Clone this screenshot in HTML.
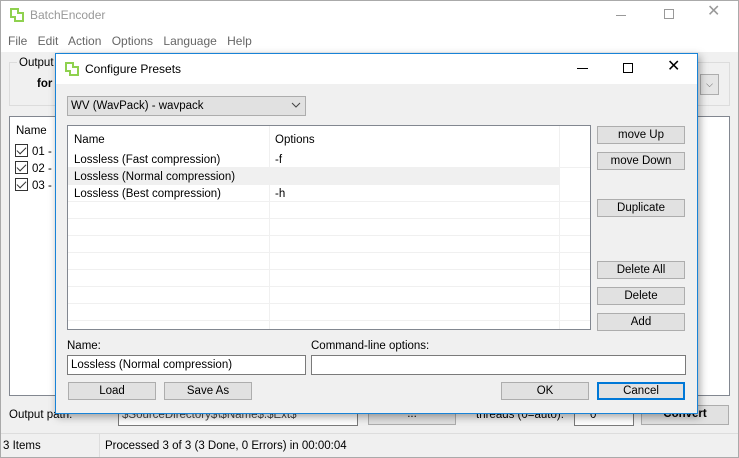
<!DOCTYPE html><html><head><style>
*{box-sizing:border-box;margin:0;padding:0}
body{width:739px;height:458px;position:relative;overflow:hidden;background:#f0f0f0;font-family:"Liberation Sans",sans-serif;font-size:11.5px;line-height:16px;color:#000}
.a{position:absolute}
.btn{position:absolute;background:#e1e1e1;border:1px solid #adadad;text-align:center;line-height:16px;font-size:11.5px}
.row{position:absolute;left:0;right:0;height:17px;border-bottom:1px solid #f0f0f0}
.cb{display:inline-block;width:13px;height:13px;border:1px solid #333;vertical-align:-2px;margin-right:4px;position:relative}
.cb:after{content:"";position:absolute;left:3px;top:0px;width:4px;height:8px;border:solid #333;border-width:0 1px 1px 0;transform:rotate(45deg)}
</style></head><body>
<div class="a" style="left:0;top:0;width:739px;height:458px;border:1px solid #aaa"></div>
<div class="a" style="left:1px;top:1px;width:737px;height:51px;background:#fff"></div>
<svg class="a" style="left:10px;top:8px" width="14" height="14"><path d="M1 1h7v4h5v8H5V9H1z" fill="none" stroke="#8fd14f" stroke-width="2"/></svg>
<div class="a" style="left:30px;top:7px;color:#999;font-size:12px">BatchEncoder</div>
<div class="a" style="left:616px;top:15px;width:10px;height:1px;background:#999"></div>
<div class="a" style="left:664px;top:9px;width:10px;height:10px;border:1px solid #999"></div>
<div class="a" style="left:707px;top:3px;color:#999;font-size:16px;line-height:18px">✕</div>
<div class="a" style="left:8px;top:33px;color:#666;font-size:12px;word-spacing:7px">File Edit Action Options Language Help</div>
<div class="a" style="left:9px;top:62px;width:721px;height:44px;border:1px solid #dcdcdc"></div>
<div class="a" style="left:17px;top:55px;background:#f0f0f0;padding:0 2px">Output</div>
<div class="a" style="left:37px;top:76px;font-weight:bold">for</div>
<div class="a" style="left:700px;top:74px;width:19px;height:21px;border:1px solid #adadad;background:#e5e5e5;font-size:9px;text-align:center;line-height:19px;color:#555">⌵</div>
<div class="a" style="left:9px;top:116px;width:721px;height:280px;background:#fff;border:1px solid #828790"></div>
<div class="a" style="left:16px;top:123px">Name</div>
<div class="a" style="left:15px;top:144px;line-height:17px"><span class="cb"></span>01 -<br><span class="cb"></span>02 -<br><span class="cb"></span>03 -</div>
<div class="a" style="left:9px;top:407px">Output path:</div>
<div class="a" style="left:118px;top:405px;width:240px;height:21px;background:#fff;border:1px solid #7a7a7a;padding:1px 3px;color:#444">$SourceDirectory$\$Name$.$Ext$</div>
<div class="btn" style="left:368px;top:405px;width:88px;height:20px">...</div>
<div class="a" style="left:476px;top:407px">threads (0=auto):</div>
<div class="a" style="left:574px;top:405px;width:60px;height:21px;background:#fff;border:1px solid #7a7a7a;padding:1px 15px">0</div>
<div class="btn" style="left:641px;top:405px;width:88px;height:20px;font-weight:bold">Convert</div>
<div class="a" style="left:1px;top:433px;width:737px;height:1px;background:#ddd"></div>
<div class="a" style="left:99px;top:434px;width:1px;height:23px;background:#ddd"></div>
<div class="a" style="left:3px;top:438px">3 Items</div>
<div class="a" style="left:105px;top:438px">Processed 3 of 3 (3 Done, 0 Errors) in 00:00:04</div>
<div class="a" style="left:55px;top:53px;width:643px;height:361px;background:#f0f0f0;border:1px solid #1883d7;box-shadow:2px 3px 8px rgba(0,0,0,.35)"></div>
<div class="a" style="left:56px;top:54px;width:641px;height:30px;background:#fff"></div>
<svg class="a" style="left:65px;top:62px" width="14" height="14"><path d="M1 1h7v4h5v8H5V9H1z" fill="none" stroke="#8fd14f" stroke-width="2"/></svg>
<div class="a" style="left:85px;top:61px;font-size:12px">Configure Presets</div>
<div class="a" style="left:577px;top:68px;width:11px;height:1px;background:#000"></div>
<div class="a" style="left:623px;top:63px;width:10px;height:10px;border:1px solid #000"></div>
<div class="a" style="left:667px;top:58px;font-size:16px;line-height:18px">✕</div>
<div class="a" style="left:67px;top:96px;width:239px;height:20px;background:#e1e1e1;border:1px solid #adadad;padding:1px 3px">WV (WavPack) - wavpack</div>
<svg class="a" style="left:291px;top:102px" width="10" height="6"><path d="M1 1l4 4 4-4" fill="none" stroke="#444"/></svg>
<div class="a" style="left:67px;top:125px;width:524px;height:205px;background:#fff;border:1px solid #828790;overflow:hidden">
 <div class="a" style="left:201px;top:0;width:1px;height:204px;background:#f0f0f0"></div>
 <div class="a" style="left:491px;top:0;width:1px;height:204px;background:#f0f0f0"></div>
 <div class="a" style="left:6px;top:6px">Name</div><div class="a" style="left:207px;top:6px">Options</div>
 <div class="row" style="top:25px"><span class="a" style="left:6px;top:1px">Lossless (Fast compression)</span><span class="a" style="left:207px;top:1px">-f</span></div>
 <div class="row" style="top:42px;right:31px;background:#f0f0f0"><span class="a" style="left:6px;top:1px">Lossless (Normal compression)</span></div>
 <div class="row" style="top:59px"><span class="a" style="left:6px;top:1px">Lossless (Best compression)</span><span class="a" style="left:207px;top:1px">-h</span></div>
 <div class="row" style="top:76px"></div><div class="row" style="top:93px"></div><div class="row" style="top:110px"></div><div class="row" style="top:127px"></div><div class="row" style="top:144px"></div><div class="row" style="top:161px"></div><div class="row" style="top:178px"></div>
</div>
<div class="btn" style="left:597px;top:126px;width:88px;height:18px">move Up</div>
<div class="btn" style="left:597px;top:152px;width:88px;height:18px">move Down</div>
<div class="btn" style="left:597px;top:199px;width:88px;height:18px">Duplicate</div>
<div class="btn" style="left:597px;top:261px;width:88px;height:18px">Delete All</div>
<div class="btn" style="left:597px;top:287px;width:88px;height:18px">Delete</div>
<div class="btn" style="left:597px;top:313px;width:88px;height:18px">Add</div>
<div class="a" style="left:67px;top:338px">Name:</div>
<div class="a" style="left:311px;top:338px">Command-line options:</div>
<div class="a" style="left:67px;top:355px;width:239px;height:20px;background:#fff;border:1px solid #7a7a7a;padding:1px 3px">Lossless (Normal compression)</div>
<div class="a" style="left:311px;top:355px;width:375px;height:20px;background:#fff;border:1px solid #7a7a7a"></div>
<div class="btn" style="left:68px;top:382px;width:88px;height:18px">Load</div>
<div class="btn" style="left:164px;top:382px;width:88px;height:18px">Save As</div>
<div class="btn" style="left:501px;top:382px;width:88px;height:18px">OK</div>
<div class="btn" style="left:597px;top:382px;width:88px;height:18px;border:2px solid #0078d7;line-height:14px">Cancel</div>
</body></html>
